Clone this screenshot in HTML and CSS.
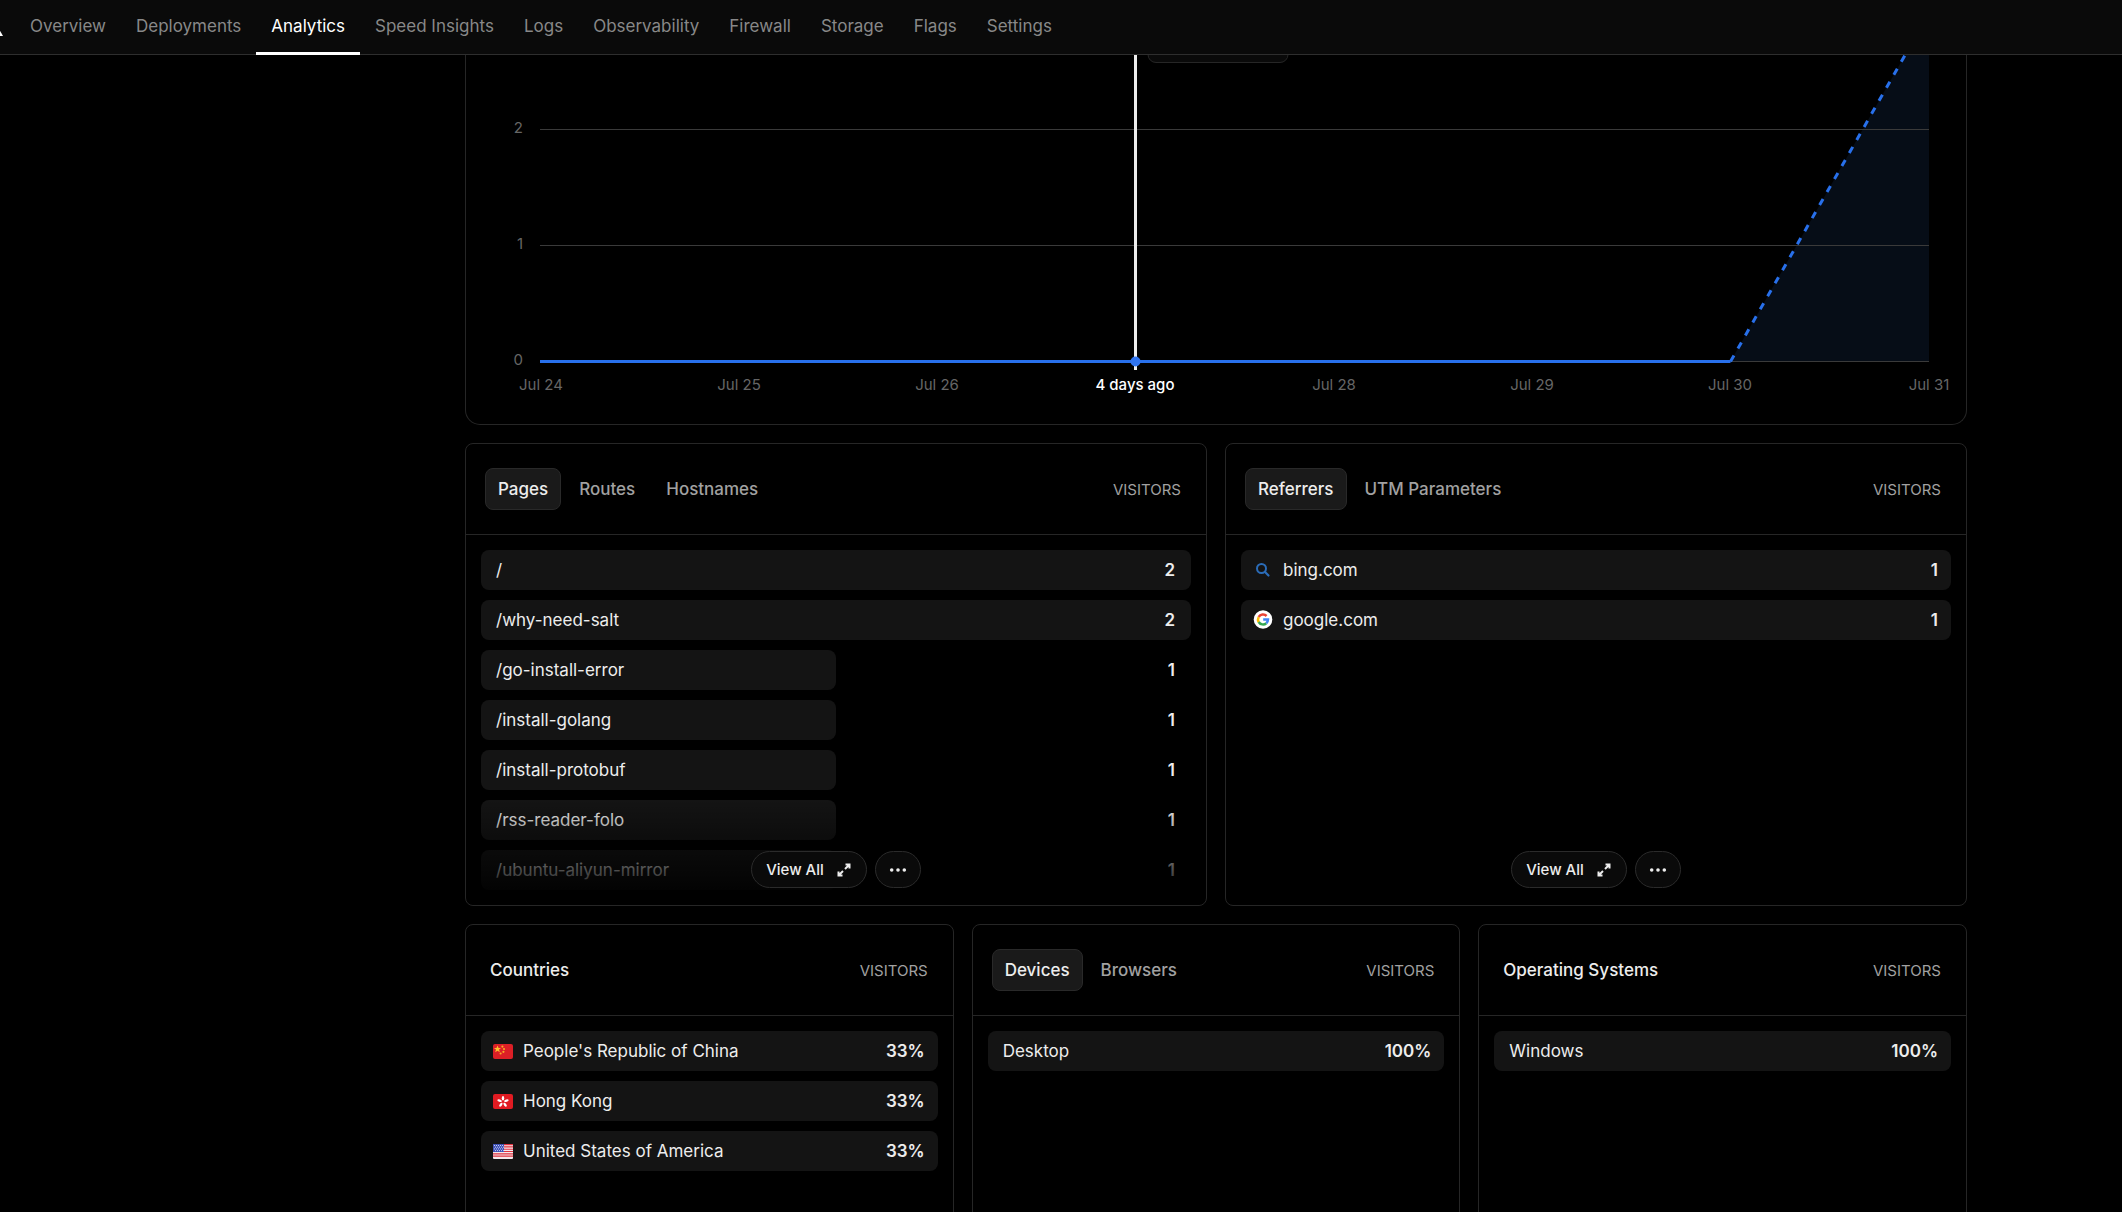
FILE: index.html
```html
<!DOCTYPE html>
<html lang="en">
  <head>
    <meta charset="UTF-8" />
    <meta name="viewport" content="width=device-width, initial-scale=1.0" />
    <title>Analytics</title>
    <link rel="stylesheet" href="styles.css">
  </head>
  <body>
    <svg width="0" height="0" class="sprite" aria-hidden="true">
      <symbol id="expand" viewBox="0 0 16 16">
        <path d="M9.500 2.500H13.500V6.500M13.500 2.500L9 7M6.500 13.500H2.500V9.500M2.500 13.500L7 9" fill="none" stroke="currentColor" stroke-width="2" />
      </symbol>
      <symbol id="dots" viewBox="0 0 20 20">
        <circle cx="3" cy="10" r="2" /><circle cx="10" cy="10" r="2" /><circle cx="17" cy="10" r="2" />
      </symbol>
    </svg>

    <nav class="nav">
      <svg class="logo" viewBox="0 0 22 20"><path d="M11 1L22 20H0z" fill="#fff" /></svg>
      <a href="#">Overview</a>
      <a href="#">Deployments</a>
      <a href="#" class="active">Analytics</a>
      <a href="#">Speed Insights</a>
      <a href="#">Logs</a>
      <a href="#">Observability</a>
      <a href="#">Firewall</a>
      <a href="#">Storage</a>
      <a href="#">Flags</a>
      <a href="#">Settings</a>
    </nav>

    <main>
      <section class="chart">
        <svg viewBox="0 0 1500 369">
          <path class="area" d="M1264.500 306.500L1463 -42V306.500z" />
          <path class="grid" d="M74 74.500H1463M74 190.500H1463M74 306.500H1463" />
          <path class="line" d="M74 306.500H1264.500" />
          <path class="line dashed" d="M1264.500 306.500L1463 -42" />
          <rect class="tooltip" x="682" y="-50" width="140" height="57.500" rx="8" />
          <path class="cursor" d="M669.500 0V315" />
          <circle class="dot" cx="669.500" cy="306.500" r="5" />
          <g class="y-axis">
            <text x="57" y="78">2</text>
            <text x="57" y="194">1</text>
            <text x="57" y="310">0</text>
          </g>
          <g class="x-axis">
            <text x="75" y="335">Jul 24</text>
            <text x="273" y="335">Jul 25</text>
            <text x="471" y="335">Jul 26</text>
            <text x="669" y="335" class="current">4 days ago</text>
            <text x="868" y="335">Jul 28</text>
            <text x="1066" y="335">Jul 29</text>
            <text x="1264" y="335">Jul 30</text>
            <text x="1463" y="335">Jul 31</text>
          </g>
        </svg>
      </section>

      <div class="row two">
        <section class="card">
          <header>
            <div class="tabs">
              <button class="tab active">Pages</button>
              <button class="tab">Routes</button>
              <button class="tab">Hostnames</button>
            </div>
            <span class="label">VISITORS</span>
          </header>
          <ul class="paths">
            <li><span class="bar" style="width: 100%"></span><span class="name">/</span><b>2</b></li>
            <li><span class="bar" style="width: 100%"></span><span class="name">/why-need-salt</span><b>2</b></li>
            <li><span class="bar" style="width: 50%"></span><span class="name">/go-install-error</span><b>1</b></li>
            <li><span class="bar" style="width: 50%"></span><span class="name">/install-golang</span><b>1</b></li>
            <li><span class="bar" style="width: 50%"></span><span class="name">/install-protobuf</span><b>1</b></li>
            <li><span class="bar" style="width: 50%"></span><span class="name">/rss-reader-folo</span><b>1</b></li>
            <li><span class="bar" style="width: 50%"></span><span class="name">/ubuntu-aliyun-mirror</span><b>1</b></li>
          </ul>
          <div class="fade"></div>
          <div class="actions">
            <button class="view-all">View All <svg><use href="#expand" /></svg></button>
            <button class="more" aria-label="More"><svg><use href="#dots" /></svg></button>
          </div>
        </section>

        <section class="card">
          <header>
            <div class="tabs">
              <button class="tab active">Referrers</button>
              <button class="tab">UTM Parameters</button>
            </div>
            <span class="label">VISITORS</span>
          </header>
          <ul>
            <li class="with-icon">
              <span class="bar" style="width: 100%"></span>
              <svg class="icon" viewBox="0 0 20 20"><circle cx="8.500" cy="8.500" r="4.500" fill="none" stroke="#2b6cb8" stroke-width="2" /><path d="M11.800 11.800L15.500 15.500" stroke="#2b6cb8" stroke-width="2.200" stroke-linecap="round" /></svg>
              <span class="name">bing.com</span><b>1</b>
            </li>
            <li class="with-icon">
              <span class="bar" style="width: 100%"></span>
              <svg class="icon" viewBox="0 0 20 20">
                <circle cx="10" cy="9.500" r="9.300" fill="#fff" />
                <g fill="none" stroke-width="2.500">
                  <path d="M13.600 6A5 5 0 0 0 5.700 7" stroke="#ea4335" />
                  <path d="M5.700 7A5 5 0 0 0 5.700 12" stroke="#fbbc05" />
                  <path d="M5.700 12A5 5 0 0 0 13.300 13.200" stroke="#34a853" />
                  <path d="M13.300 13.200A5 5 0 0 0 15 9.500H10.200" stroke="#4285f4" />
                </g>
              </svg>
              <span class="name">google.com</span><b>1</b>
            </li>
          </ul>
          <div class="actions">
            <button class="view-all">View All <svg><use href="#expand" /></svg></button>
            <button class="more" aria-label="More"><svg><use href="#dots" /></svg></button>
          </div>
        </section>
      </div>

      <div class="row three">
        <section class="card">
          <header>
            <h2>Countries</h2>
            <span class="label">VISITORS</span>
          </header>
          <ul>
            <li class="with-icon">
              <span class="bar" style="width: 100%"></span>
              <svg class="flag" viewBox="0 0 20 15">
                <rect width="20" height="15" rx="2" fill="#dc1f26" />
                <path d="M4.500 1.400l1 2.500h2.600L6 5.600l.8 2.600-2.300-1.500-2.300 1.500.8-2.600L.9 3.900h2.600z" fill="#fbc02d" />
                <g fill="#f9a825"><circle cx="9.400" cy="2.600" r="1.100" /><circle cx="11" cy="5" r="1.100" /><circle cx="10.400" cy="7.800" r="1.100" /><circle cx="7.600" cy="9.500" r="1.100" /></g>
              </svg>
              <span class="name">People's Republic of China</span><b>33%</b>
            </li>
            <li class="with-icon">
              <span class="bar" style="width: 100%"></span>
              <svg class="flag" viewBox="0 0 20 15">
                <rect width="20" height="15" rx="2" fill="#e11b22" />
                <g fill="#fff">
                  <ellipse cx="10" cy="4.200" rx="1.200" ry="2.300" />
                  <ellipse cx="10" cy="4.200" rx="1.200" ry="2.300" transform="rotate(72 10 7.800)" />
                  <ellipse cx="10" cy="4.200" rx="1.200" ry="2.300" transform="rotate(144 10 7.800)" />
                  <ellipse cx="10" cy="4.200" rx="1.200" ry="2.300" transform="rotate(216 10 7.800)" />
                  <ellipse cx="10" cy="4.200" rx="1.200" ry="2.300" transform="rotate(288 10 7.800)" />
                </g>
              </svg>
              <span class="name">Hong Kong</span><b>33%</b>
            </li>
            <li class="with-icon">
              <span class="bar" style="width: 100%"></span>
              <svg class="flag" viewBox="0 0 20 15">
                <rect width="20" height="15" rx="1" fill="#f5e9ec" />
                <path d="M0 .6H20M0 2.900H20M0 5.200H20M0 7.500H20M0 9.800H20M0 12.100H20" stroke="#e0323f" stroke-width="1.150" />
                <rect width="11" height="8" fill="#3f51b5" />
                <path d="M1 1.500H11M2 3.200H11M1 4.900H11M2 6.600H11" stroke="#c5cdf0" stroke-width="1" stroke-dasharray="1 1" />
              </svg>
              <span class="name">United States of America</span><b>33%</b>
            </li>
          </ul>
        </section>

        <section class="card">
          <header>
            <div class="tabs">
              <button class="tab active">Devices</button>
              <button class="tab">Browsers</button>
            </div>
            <span class="label">VISITORS</span>
          </header>
          <ul>
            <li><span class="bar" style="width: 100%"></span><span class="name">Desktop</span><b>100%</b></li>
          </ul>
        </section>

        <section class="card">
          <header>
            <h2>Operating Systems</h2>
            <span class="label">VISITORS</span>
          </header>
          <ul>
            <li><span class="bar" style="width: 100%"></span><span class="name">Windows</span><b>100%</b></li>
          </ul>
        </section>
      </div>
    </main>
  </body>
</html>
```

FILE: styles.css
```css
* {
  box-sizing: border-box;
}

body {
  margin: 0;
  height: 100vh;
  overflow: hidden;
  background: #000;
  color: #ededed;
  font-family: Inter, "Liberation Sans", sans-serif;
  font-size: 17px;
}

button {
  font: inherit;
  color: inherit;
  cursor: pointer;
}

.sprite {
  position: absolute;
}

/* top navigation */
.nav {
  display: flex;
  height: 55px;
  background: #0a0a0a;
  border-bottom: 1px solid #2e2e2e;
}

.logo {
  flex: none;
  width: 22px;
  height: 20px;
  margin: 16px 12px 0 -19px;
}

.nav a {
  position: relative;
  display: flex;
  align-items: center;
  padding: 0 15px 2px;
  color: #888;
  text-decoration: none;
  white-space: nowrap;
}

.nav a.active {
  color: #fff;
}

.nav a.active::after {
  content: "";
  position: absolute;
  left: 0;
  right: 0;
  bottom: -1px;
  height: 3px;
  background: #fff;
}

main {
  display: flex;
  flex-direction: column;
  gap: 18px;
  margin: 0 155px 0 465px;
}

/* visitors chart */
.chart {
  border: 1px solid #262626;
  border-top: 0;
  border-radius: 0 0 15px 15px;
}

.chart svg {
  display: block;
  width: 100%;
}

.chart text {
  font-size: 15px;
  fill: #666;
}

.chart .current {
  fill: #fff;
  font-weight: 500;
}

.y-axis {
  text-anchor: end;
}

.x-axis {
  text-anchor: middle;
}

.grid {
  stroke: #3a3a3a;
}

.area {
  fill: #060d17;
}

.line {
  fill: none;
  stroke: #2870eb;
  stroke-width: 3;
}

.dashed {
  stroke-dasharray: 7 8;
}

.cursor {
  stroke: #eee;
  stroke-width: 3;
}

.dot {
  fill: #2f74f0;
}

.tooltip {
  fill: #0a0a0a;
  stroke: #262626;
}

/* cards */
.row {
  display: grid;
  gap: 18px;
}

.two {
  grid-template-columns: repeat(2, 1fr);
}

.three {
  grid-template-columns: repeat(3, 1fr);
}

.card {
  position: relative;
  min-height: 463px;
  border: 1px solid #262626;
  border-radius: 8px;
}

.card header {
  display: flex;
  align-items: center;
  justify-content: space-between;
  height: 91px;
  padding: 0 25px 0 19px;
  border-bottom: 1px solid #262626;
}

.card h2 {
  margin: 0 0 0 5px;
  font-size: 17px;
  font-weight: 500;
}

.tabs {
  display: flex;
  gap: 5px;
}

.tab {
  height: 42px;
  padding: 0 12px;
  border: 1px solid transparent;
  border-radius: 8px;
  background: none;
  color: #a1a1a1;
  font-weight: 500;
}

.tab.active {
  border-color: #292929;
  background: #1a1a1a;
  color: #ededed;
}

.label {
  color: #a1a1a1;
  font-size: 15px;
}

.card ul {
  display: flex;
  flex-direction: column;
  gap: 10px;
  margin: 0;
  padding: 15px;
  list-style: none;
}

.card li {
  position: relative;
  display: flex;
  align-items: center;
  gap: 10px;
  height: 40px;
  padding: 0 13px 0 15px;
}

.card .paths li {
  padding-right: 16px;
}

.card .with-icon {
  padding-left: 12px;
}

.bar {
  position: absolute;
  top: 0;
  left: 0;
  height: 100%;
  border-radius: 8px;
  background: #141414;
}

.name,
.icon,
.flag,
.card b {
  position: relative;
}

.card b {
  margin-left: auto;
  font-weight: 600;
}

.icon {
  width: 20px;
  height: 20px;
}

.flag {
  width: 20px;
  height: 15px;
}

.fade {
  position: absolute;
  right: 1px;
  bottom: 0;
  left: 1px;
  height: 106px;
  border-radius: 8px;
  background: linear-gradient(rgba(0, 0, 0, 0), #000);
}

.actions {
  position: absolute;
  right: 0;
  bottom: 17px;
  left: 0;
  display: flex;
  justify-content: center;
  gap: 8px;
}

.actions button {
  display: flex;
  align-items: center;
  justify-content: center;
  height: 37px;
  padding: 0 14px;
  border: 1px solid #2b2b2b;
  border-radius: 19px;
  background: #0a0a0a;
  font-size: 15px;
  font-weight: 500;
}

.actions .view-all {
  gap: 12px;
}

.view-all svg {
  width: 16px;
  height: 16px;
}

.actions .more {
  padding: 0 13px;
}

.more svg {
  width: 18px;
  height: 18px;
  fill: currentColor;
}
```
